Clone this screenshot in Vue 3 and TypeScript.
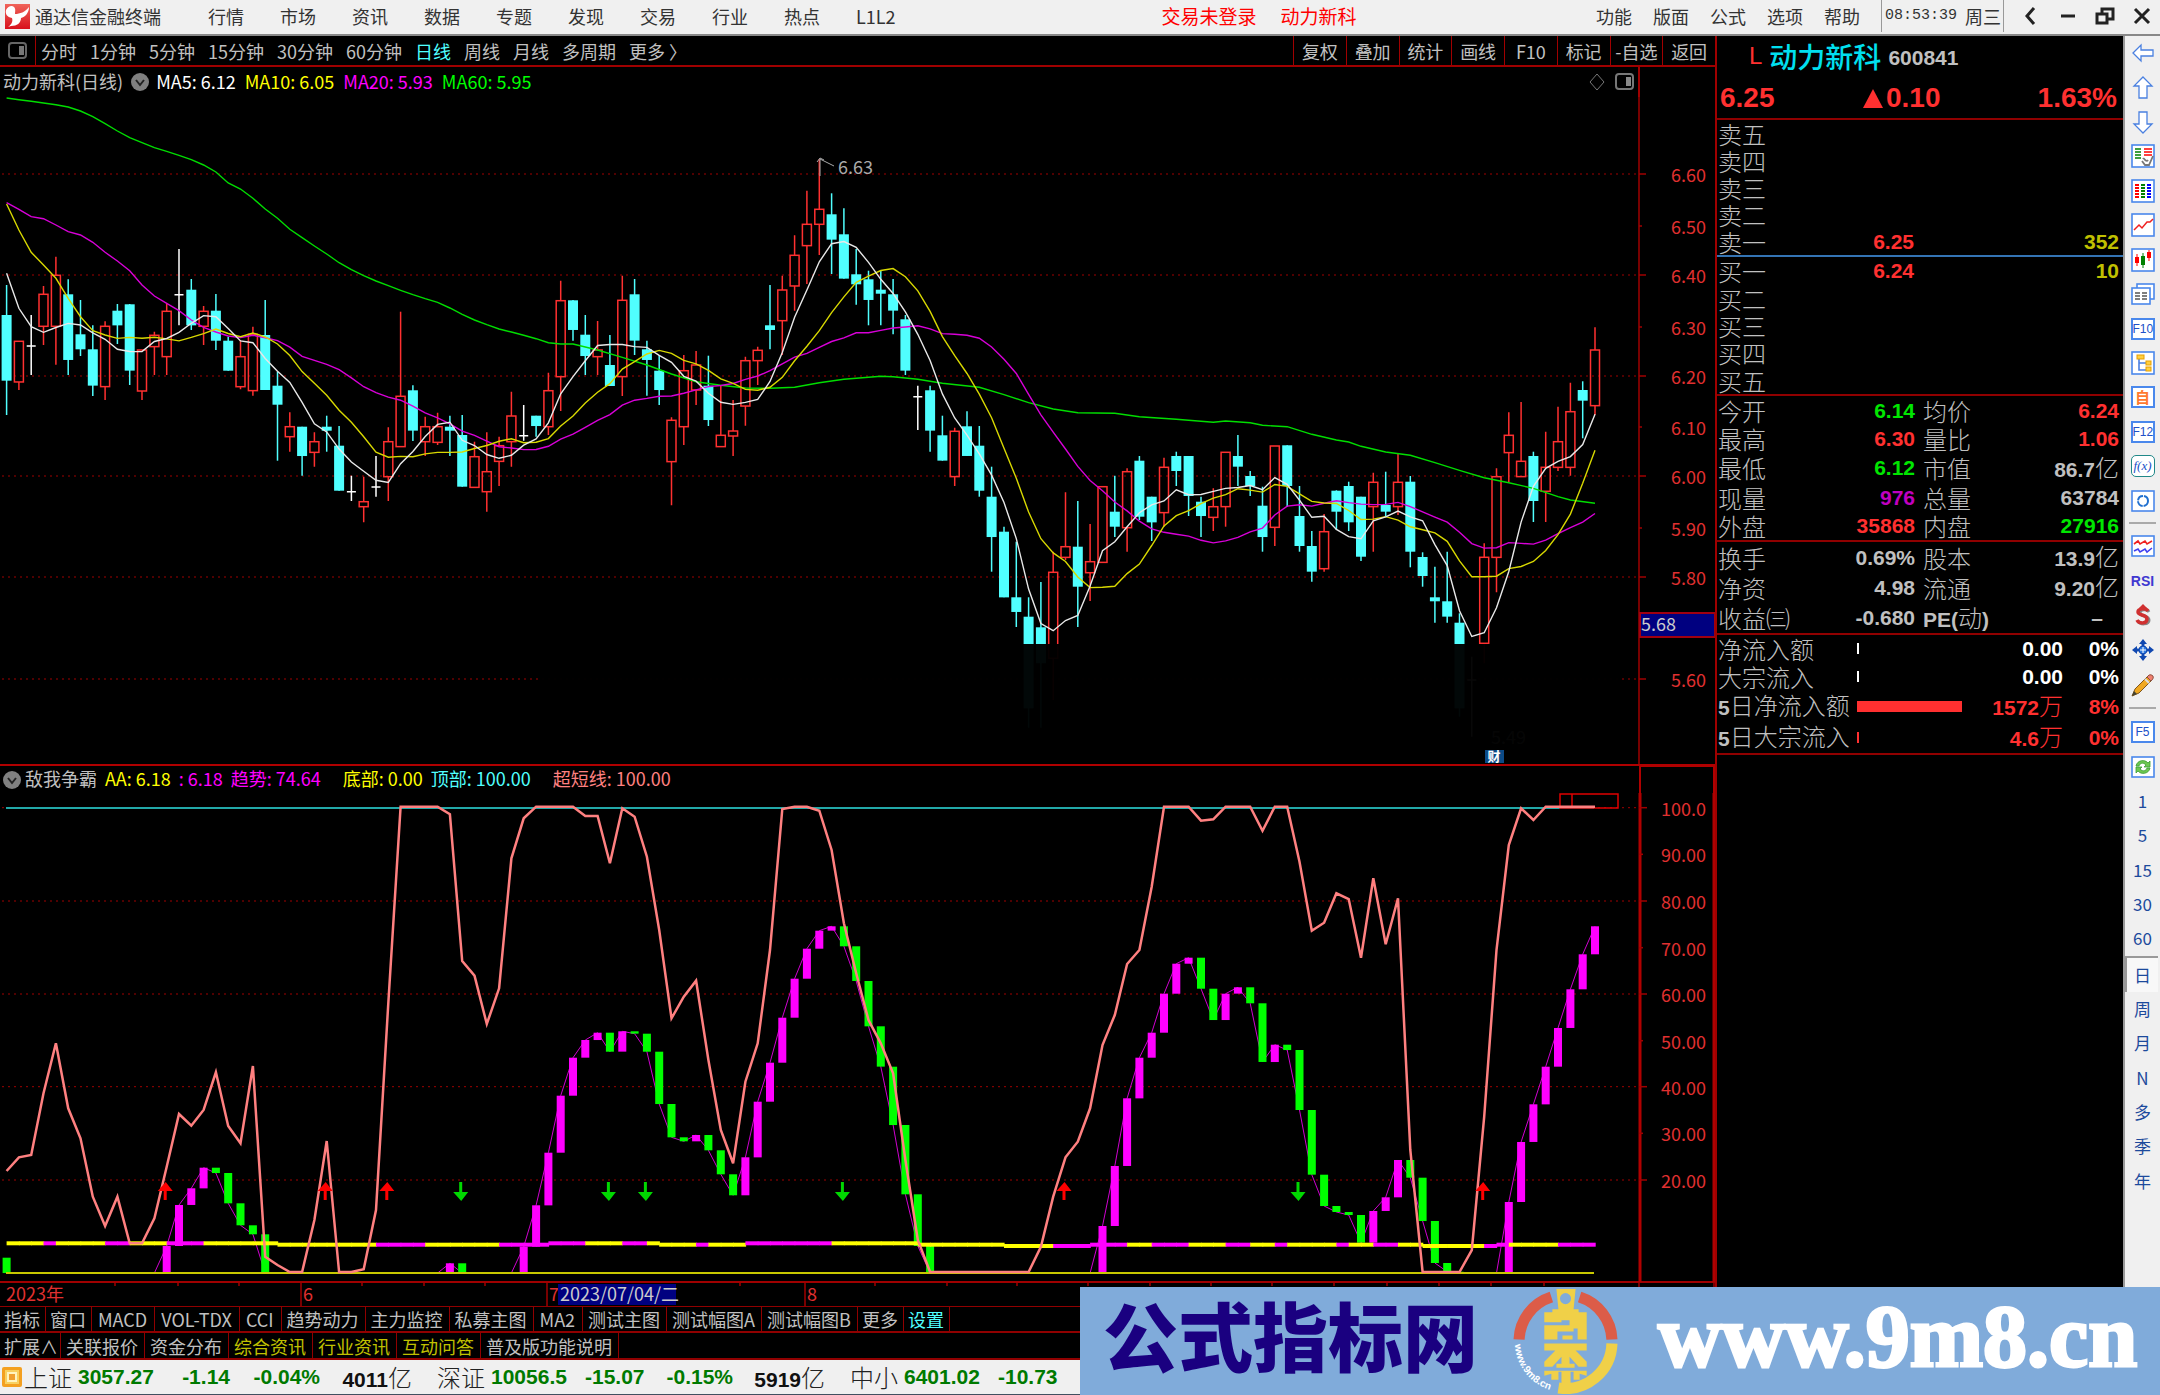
<script setup lang="ts">
type Kind = 'd' | 'u' | 'x'
/** kind, high, body top, body bottom, low – vertical values in thirds of a pixel */
type Candle = [Kind, number, number, number, number]
type Point = [number, number]

const STEP = 12.313
const xOf = (i: number) => Math.round((6.6 + STEP * i) * 10) / 10
const yOf = (v: number) => Math.round((v / 3) * 10) / 10
const yLow = (v: number) => Math.round((790 + v / 3) * 10) / 10

const menus = ['行情', '市场', '资讯', '数据', '专题', '发现', '交易', '行业', '热点', 'L1L2']
const tools = ['功能', '版面', '公式', '选项', '帮助']
const periods = ['分时', '1分钟', '5分钟', '15分钟', '30分钟', '60分钟', '日线', '周线', '月线', '多周期', '更多 〉']
const actions = ['复权', '叠加', '统计', '画线', 'F10', '标记', '-自选', '返回']
const tabs = ['指标', '窗口', 'MACD', 'VOL-TDX', 'CCI', '趋势动力', '主力监控', '私募主图', 'MA2', '测试主图', '测试幅图A', '测试幅图B', '更多', '设置']
const links = ['扩展∧', '关联报价', '资金分布', '综合资讯', '行业资讯', '互动问答', '普及版功能说明']
const hotLinks = ['综合资讯', '行业资讯', '互动问答']
const shortcuts = ['1', '5', '15', '30', '60', '日', '周', '月', 'N', '多', '季', '年']

const candles: Candle[] = [
  ['d', 855, 945, 1142, 1245], ['u', 1024, 1024, 1146, 1170], ['x', 945, 1038, 1038, 1125], ['u', 858, 883, 979, 1035],
  ['u', 770, 826, 979, 1094], ['d', 838, 883, 1080, 1125], ['d', 900, 1003, 1048, 1068], ['d', 976, 1048, 1157, 1188],
  ['u', 964, 979, 1160, 1200], ['d', 912, 932, 976, 1032], ['d', 912, 913, 1112, 1155], ['u', 1050, 1050, 1173, 1200],
  ['u', 995, 1006, 1040, 1125], ['u', 910, 934, 1070, 1125], ['x', 747, 884, 884, 976], ['d', 837, 869, 976, 990],
  ['u', 918, 934, 979, 1035], ['d', 882, 932, 1022, 1050], ['d', 1010, 1022, 1112, 1112], ['u', 1020, 1070, 1160, 1168],
  ['u', 980, 1003, 1172, 1187], ['d', 900, 1005, 1170, 1170], ['d', 1115, 1157, 1214, 1382], ['u', 1237, 1280, 1310, 1355],
  ['d', 1280, 1280, 1368, 1427], ['u', 1297, 1325, 1357, 1400], ['d', 1247, 1280, 1292, 1355], ['d', 1278, 1337, 1472, 1472],
  ['x', 1427, 1475, 1475, 1503], ['u', 1430, 1505, 1520, 1567], ['x', 1368, 1461, 1461, 1490], ['u', 1282, 1325, 1430, 1503],
  ['u', 935, 1189, 1340, 1340], ['d', 1156, 1171, 1292, 1323], ['u', 1250, 1280, 1325, 1368], ['u', 1238, 1280, 1327, 1335],
  ['d', 1247, 1280, 1292, 1368], ['d', 1245, 1305, 1460, 1460], ['u', 1325, 1370, 1462, 1462], ['u', 1297, 1415, 1475, 1535],
  ['u', 1310, 1337, 1384, 1458], ['u', 1175, 1248, 1325, 1400], ['x', 1215, 1307, 1307, 1322], ['d', 1247, 1247, 1278, 1310],
  ['u', 1118, 1172, 1280, 1305], ['u', 842, 902, 1130, 1233], ['d', 900, 901, 990, 1022], ['d', 945, 1004, 1068, 1125],
  ['u', 963, 1050, 1070, 1125], ['d', 1005, 1095, 1158, 1158], ['u', 827, 901, 1130, 1188], ['d', 837, 883, 1022, 1065],
  ['d', 1022, 1048, 1080, 1187], ['d', 1065, 1112, 1170, 1215], ['u', 1252, 1261, 1385, 1516], ['u', 1065, 1112, 1280, 1335],
  ['u', 1053, 1095, 1170, 1215], ['d', 1067, 1157, 1260, 1278], ['u', 1157, 1306, 1340, 1340], ['u', 1200, 1293, 1308, 1368],
  ['u', 1070, 1082, 1218, 1277], ['u', 1040, 1051, 1082, 1155], ['d', 855, 976, 990, 1048], ['u', 827, 870, 962, 1065],
  ['u', 706, 766, 858, 932], ['u', 572, 673, 737, 852], ['u', 478, 628, 673, 765], ['d', 580, 643, 719, 822],
  ['d', 625, 703, 836, 836], ['d', 747, 823, 853, 914], ['d', 812, 838, 900, 976], ['d', 812, 869, 881, 976],
  ['d', 837, 883, 932, 1003], ['d', 945, 958, 1112, 1125], ['x', 1157, 1190, 1190, 1290], ['d', 1157, 1171, 1292, 1355],
  ['d', 1247, 1306, 1382, 1382], ['u', 1283, 1294, 1430, 1458], ['d', 1234, 1279, 1368, 1368], ['d', 1278, 1337, 1472, 1490],
  ['d', 1400, 1490, 1611, 1715], ['d', 1580, 1595, 1792, 1792], ['d', 1625, 1792, 1836, 1881], ['d', 1792, 1850, 2125, 2183],
  ['d', 1746, 1882, 1990, 2183], ['u', 1655, 1717, 1975, 2100], ['u', 1477, 1640, 1672, 1680], ['d', 1503, 1640, 1760, 1881],
  ['u', 1572, 1685, 1718, 1803], ['u', 1460, 1460, 1687, 1687], ['d', 1427, 1535, 1580, 1611], ['u', 1405, 1415, 1583, 1655],
  ['d', 1368, 1382, 1550, 1560], ['d', 1490, 1490, 1567, 1623], ['u', 1373, 1402, 1538, 1580], ['d', 1355, 1368, 1413, 1458],
  ['d', 1368, 1368, 1488, 1548], ['d', 1490, 1505, 1548, 1611], ['u', 1465, 1520, 1552, 1593], ['u', 1357, 1357, 1520, 1580],
  ['d', 1305, 1368, 1400, 1458], ['d', 1413, 1428, 1458, 1488], ['d', 1460, 1517, 1611, 1655], ['u', 1338, 1338, 1582, 1638],
  ['d', 1336, 1336, 1458, 1520], ['d', 1458, 1548, 1638, 1655], ['d', 1593, 1638, 1715, 1745], ['u', 1542, 1595, 1706, 1715],
  ['d', 1471, 1472, 1535, 1590], ['d', 1445, 1458, 1567, 1593], ['d', 1490, 1490, 1670, 1683], ['u', 1418, 1447, 1520, 1655],
  ['d', 1415, 1515, 1535, 1550], ['u', 1362, 1447, 1520, 1545], ['d', 1428, 1445, 1655, 1702], ['d', 1657, 1671, 1728, 1760],
  ['d', 1700, 1792, 1804, 1868], ['d', 1655, 1804, 1850, 1868], ['d', 1840, 1868, 2125, 2150], ['x', 1970, 2040, 2040, 2210],
  ['u', 1630, 1672, 1930, 1990], ['u', 1405, 1430, 1672, 1777], ['u', 1237, 1306, 1358, 1446], ['u', 1206, 1384, 1430, 1430],
  ['d', 1355, 1368, 1503, 1566], ['u', 1295, 1402, 1474, 1566], ['u', 1220, 1325, 1402, 1413], ['u', 1148, 1235, 1402, 1427],
  ['d', 1144, 1170, 1202, 1315], ['u', 982, 1050, 1217, 1245],
]

const closes = candles.map((c) => (c[0] === 'u' ? c[2] : c[3]))

/** Moving average over n closes; the head of the window comes from earlier sessions. */
function average(n: number, head: number[]): string {
  return closes
    .map((_, i) => {
      if (i < n - 1) return head[i]
      return closes.slice(i - n + 1, i + 1).reduce((a, b) => a + b, 0) / n
    })
    .map((v, i) => `${xOf(i)},${yOf(v)}`)
    .join(' ')
}

const ma5 = average(5, [820, 925, 980, 997])
const ma10 = average(10, [612, 690, 757, 795, 835, 895, 950, 992, 1005])
const ma20 = average(20, [608, 628, 650, 656, 675, 695, 705, 727, 757, 783, 812, 855, 888, 910, 932, 960, 982, 996, 1008])

const ma60Points: Point[] = [
  [0, 294], [1, 299], [2, 304], [3, 309], [4, 314], [5, 321], [6, 333], [7, 350], [8, 371], [9, 393], [10, 413], [11, 428],
  [12, 443], [13, 454], [14, 466], [15, 479], [16, 495], [17, 516], [18, 549], [19, 567], [20, 595], [21, 627], [22, 655],
  [23, 688], [24, 713], [25, 738], [26, 762], [27, 788], [28, 809], [29, 827], [30, 843], [31, 857], [32, 871], [33, 884],
  [34, 896], [35, 907], [36, 924], [37, 943], [38, 960], [39, 974], [40, 987], [41, 996], [42, 1006], [43, 1016], [44, 1028],
  [45, 1032], [46, 1032], [48, 1050], [50, 1072], [52, 1095], [54, 1122], [56, 1145], [58, 1156], [60, 1164], [62, 1165],
  [64, 1162], [66, 1148], [68, 1138], [71, 1129], [72, 1130], [74, 1138], [76, 1150], [79, 1162], [81, 1184], [83, 1208],
  [85, 1227], [87, 1238], [90, 1240], [92, 1250], [95, 1258], [98, 1267], [99, 1263], [101, 1268], [102, 1276], [104, 1280],
  [106, 1303], [108, 1320], [109, 1326], [110, 1339], [112, 1356], [114, 1366], [116, 1388], [118, 1411], [120, 1433],
  [122, 1448], [124, 1465], [126, 1490], [127, 1500], [129, 1510],
]
const ma60 = ma60Points.map(([i, v]) => `${xOf(i)},${yOf(v)}`).join(' ')

const priceTicks = [
  { t: '6.60', y: 174, major: true }, { t: '6.50', y: 226, major: false }, { t: '6.40', y: 275, major: true },
  { t: '6.30', y: 327, major: false }, { t: '6.20', y: 376, major: true }, { t: '6.10', y: 427, major: false },
  { t: '6.00', y: 476, major: true }, { t: '5.90', y: 528, major: false }, { t: '5.80', y: 577, major: true },
  { t: '5.60', y: 679, major: true },
]

const shortPoints: Point[] = [
  [0, 1143], [1, 1102], [2, 1095], [3, 910], [4, 760], [5, 955], [6, 1045], [7, 1220], [8, 1308], [9, 1220], [10, 1360],
  [11, 1360], [12, 1285], [13, 1130], [14, 972], [15, 1007], [16, 960], [17, 847], [18, 1008], [19, 1060], [20, 828],
  [21, 1400], [22, 1425], [23, 1446], [24, 1446], [25, 1290], [26, 1053], [27, 1446], [28, 1446], [29, 1438], [30, 1260],
  [31, 640], [32, 50], [35, 50], [36, 73], [37, 513], [38, 557], [39, 702], [40, 595], [41, 205], [42, 85], [43, 50],
  [46, 50], [47, 78], [48, 78], [49, 220], [50, 55], [51, 80], [52, 200], [53, 420], [54, 685], [55, 620], [56, 572],
  [57, 810], [58, 1020], [59, 1120], [60, 875], [61, 760], [62, 480], [63, 57], [64, 50], [65, 50], [66, 62], [67, 180],
  [68, 400], [69, 550], [70, 690], [71, 760], [72, 850], [73, 1110], [74, 1350], [75, 1446], [83, 1446], [84, 1370],
  [85, 1220], [86, 1102], [87, 1055], [88, 955], [89, 765], [90, 675], [91, 522], [92, 480], [93, 290], [94, 50], [96, 50],
  [97, 92], [98, 88], [99, 50], [101, 50], [102, 122], [103, 50], [104, 50], [105, 215], [106, 422], [107, 398], [108, 310],
  [109, 327], [110, 503], [111, 265], [112, 463], [113, 325], [114, 1080], [115, 1446], [118, 1446], [119, 1380], [120, 980],
  [121, 480], [122, 165], [123, 55], [124, 90], [125, 50], [129, 50],
]
const shortLine = shortPoints.map(([i, v]) => `${xOf(i)},${yLow(v)}`).join(' ')

const zero = 1449
const flat = (n: number) => Array<number>(n).fill(zero)
const trend: number[] = [
  ...flat(13), 1368, 1245, 1195, 1133, 1149, 1240, 1306, 1333, ...flat(15), 1420, ...flat(5),
  1370, 1246, 1088, 917, 803, 750, 728, 785, 724, 731, 785, 942, 1042, 1054, 1035, 1081, 1153, 1216, 1102, 935, 818, 683,
  566, 476, 422, 409, 469, 573, 709, 830, 1005, 1213, 1368, ...flat(14), 1308, 1128, 925, 803, 728, 611, 521, 503, 596,
  690, 611, 592, 640, 816, 764, 780, 960, 1154, 1248, 1266, 1275, 1358, 1263, 1222, 1110, 1163, 1293, 1419, 1445,
  ...flat(4), 1236, 1056, 943, 830, 714, 598, 493, 409,
]
const trendLine = trend.map((v, i) => `${xOf(i)},${yLow(v)}`).join(' ')
const bars = trend
  .map((v, i) => {
    const prev = i === 0 ? 1403 : trend[i - 1]
    return { x: xOf(i) - 4, y: yLow(Math.min(v, prev)), h: Math.max(2, Math.abs(v - prev) / 3), up: v < prev, skip: v === prev }
  })
  .filter((b) => !b.skip)

const ribbonStops = [3, 4, 8, 10, 13, 16, 30, 34, 40, 47, 50, 52, 56, 57, 60, 67, 85, 91, 93, 96, 99, 101, 103, 104, 108, 109, 111, 113, 120, 122, 126, 129]
const ribbonLevels: Point[] = [[22, 1360], [44, 1364], [53, 1360], [60, 1364], [74, 1360], [81, 1364], [88, 1368], [115, 1364], [121, 1368], [129, 1364]]
const ribbon = Array.from({ length: 129 }, (_, i) => {
  const band = ribbonStops.findIndex((s) => i < s)
  const level = ribbonLevels.find(([end]) => i < end) ?? [129, 1364]
  return { x: xOf(i), y: yLow(level[1]) - 2, hot: band % 2 === 1 }
})

const lowTicks = [
  { t: '100.0', v: 53, major: true }, { t: '90.00', v: 193, major: false }, { t: '80.00', v: 333, major: true },
  { t: '70.00', v: 473, major: false }, { t: '60.00', v: 612, major: true }, { t: '50.00', v: 752, major: false },
  { t: '40.00', v: 890, major: true }, { t: '30.00', v: 1030, major: false }, { t: '20.00', v: 1170, major: true },
]
const buySignals = [13, 26, 31, 86, 120]
const sellSignals = [37, 49, 52, 68, 105]
const dateTicks = [115, 178, 239, 362, 424, 485, 740, 875, 947, 1017, 1088, 1150, 1211, 1272, 1334, 1387, 1439, 1491, 1544]
const months = [{ t: '6', x: 301 }, { t: '7', x: 547 }, { t: '8', x: 805 }]

const asks = [['卖五'], ['卖四'], ['卖三'], ['卖二'], ['卖一', '6.25', '352']]
const bids = [['买一', '6.24', '10'], ['买二'], ['买三'], ['买四'], ['买五']]

interface Cell { k: string; v: string; c: string; unit?: string }
const stats: [Cell, Cell][] = [
  [{ k: '今开', v: '6.14', c: 'green' }, { k: '均价', v: '6.24', c: 'red' }],
  [{ k: '最高', v: '6.30', c: 'red' }, { k: '量比', v: '1.06', c: 'red' }],
  [{ k: '最低', v: '6.12', c: 'green' }, { k: '市值', v: '86.7', c: 'gray', unit: '亿' }],
  [{ k: '现量', v: '976', c: 'violet' }, { k: '总量', v: '63784', c: 'gray' }],
  [{ k: '外盘', v: '35868', c: 'red' }, { k: '内盘', v: '27916', c: 'green' }],
]
const finance: [Cell, Cell][] = [
  [{ k: '换手', v: '0.69%', c: 'gray' }, { k: '股本', v: '13.9', c: 'gray', unit: '亿' }],
  [{ k: '净资', v: '4.98', c: 'gray' }, { k: '流通', v: '9.20', c: 'gray', unit: '亿' }],
  [{ k: '收益㈢', v: '-0.680', c: 'gray' }, { k: 'PE(动)', v: '–', c: 'gray dash' }],
]
const flows = [
  { p: '', k: '净流入额', w: 2, v: '0.00', unit: '', pct: '0%', c: 'white' },
  { p: '', k: '大宗流入', w: 2, v: '0.00', unit: '', pct: '0%', c: 'white' },
  { p: '5', k: '日净流入额', w: 105, v: '1572', unit: '万', pct: '8%', c: 'red' },
  { p: '5', k: '日大宗流入', w: 2, v: '4.6', unit: '万', pct: '0%', c: 'red' },
]
const indexes = [
  { n: '上证', p: '3057.27', d: '-1.14', r: '-0.04%', a: '4011' },
  { n: '深证', p: '10056.5', d: '-15.07', r: '-0.15%', a: '5919' },
  { n: '中小', p: '6401.02', d: '-10.73', r: '', a: '' },
]

const tabClass = (t: string) => ({
  brief: /^[\u4e00-\u9fff]{2}$/.test(t),
  latin: /^[A-Z]/.test(t),
  set: t === '设置',
})
</script>

<template>
  <div class="app">
    <header class="menubar">
      <div class="brand">
        <svg width="25" height="25" viewBox="0 0 25 25">
          <defs>
            <linearGradient id="brandRed" x1="0" y1="0" x2="0" y2="1">
              <stop offset="0" stop-color="#f0645a" /><stop offset="1" stop-color="#d8101c" />
            </linearGradient>
          </defs>
          <rect width="25" height="25" fill="url(#brandRed)" />
          <path d="M1 6C3 2 7 1 9 3C11 5 10 8 10 10C15 10 20 8 24 3C24 9 20 13 16 14C16 19 12 22 6 22L3 23C7 20 8 17 7 14C2 13 0 10 1 6Z" fill="#fff" />
        </svg>
        <span>通达信金融终端</span>
      </div>
      <nav class="menus"><button v-for="m in menus" :key="m" type="button">{{ m }}</button></nav>
      <div class="alerts"><span>交易未登录</span><span>动力新科</span></div>
      <nav class="tools"><button v-for="m in tools" :key="m" type="button">{{ m }}</button></nav>
      <div class="clock"><time>08:53:39</time><span>周三</span></div>
      <div class="window-keys">
        <button type="button" aria-label="后退"><svg width="20" height="20" viewBox="0 0 20 20"><path d="M13 2L6 10L13 18" /></svg></button>
        <button type="button" aria-label="最小化"><svg width="20" height="20" viewBox="0 0 20 20"><path d="M3 10H17" /></svg></button>
        <button type="button" aria-label="还原"><svg width="20" height="20" viewBox="0 0 20 20"><path d="M2 8H12V17H2ZM7 8V3H18V13H12" /></svg></button>
        <button type="button" aria-label="关闭"><svg width="20" height="20" viewBox="0 0 20 20"><path d="M3 3L17 17M17 3L3 17" /></svg></button>
      </div>
    </header>

    <div class="body">
      <main class="charts">
        <div class="periodbar">
          <button class="panel-key" type="button" aria-label="侧栏">
            <svg width="20" height="18" viewBox="0 0 20 18"><rect x="1" y="1" width="17" height="15" rx="3" fill="none" stroke="#666" stroke-width="2" /><rect x="11" y="4" width="5" height="9" fill="#777" /></svg>
          </button>
          <nav class="periods"><button v-for="p in periods" :key="p" type="button" :class="{ on: p === '日线' }">{{ p }}</button></nav>
          <div class="actions"><button v-for="a in actions" :key="a" type="button">{{ a }}</button></div>
        </div>

        <section class="pane">
          <div class="legend">
            <span class="gray">动力新科(日线)</span>
            <svg class="drop" width="18" height="18" viewBox="0 0 18 18"><circle cx="9" cy="9" r="9" fill="#808080" /><path d="M5 7L9 12L13 7" fill="none" stroke="#222" stroke-width="2" /></svg>
            <span class="paper">MA5: 6.12</span><span class="yellow">MA10: 6.05</span><span class="magenta">MA20: 5.93</span><span class="lime">MA60: 5.95</span>
            <svg class="corner" width="50" height="20" viewBox="0 0 50 20"><path d="M9 2L16 10L9 18L2 10Z" fill="none" stroke="#777" /><rect x="28" y="2" width="17" height="15" rx="3" fill="none" stroke="#777" stroke-width="2" /><rect x="38" y="5" width="5" height="9" fill="#888" /></svg>
            <i class="axis-cap"></i>
          </div>
          <svg class="plot" viewBox="0 97 1715 667" role="img" aria-label="K线图">
            <g class="grid"><path v-for="t in priceTicks.filter((p) => p.major)" :key="t.t" :d="`M2 ${t.y}H1638`" /></g>
            <g v-for="(c, i) in candles" :key="i" :class="['candle', c[0]]">
              <template v-if="c[0] === 'd'">
                <path :d="`M${xOf(i)} ${yOf(c[1])}V${yOf(c[4])}`" />
                <rect :x="xOf(i) - 5" :y="yOf(c[2])" width="10" :height="(c[3] - c[2]) / 3" />
              </template>
              <template v-else-if="c[0] === 'u'">
                <path :d="`M${xOf(i)} ${yOf(c[1])}V${yOf(c[2])}M${xOf(i)} ${yOf(c[3])}V${yOf(c[4])}`" />
                <rect :x="xOf(i) - 4.5" :y="yOf(c[2])" width="9" :height="(c[3] - c[2]) / 3" />
              </template>
              <path v-else :d="`M${xOf(i)} ${yOf(c[1])}V${yOf(c[4])}M${xOf(i) - 4.5} ${yOf(c[2])}h9`" />
            </g>
            <polyline class="ma" :points="ma60" stroke="#0d0" />
            <polyline class="ma" :points="ma20" stroke="#d800d8" />
            <polyline class="ma" :points="ma10" stroke="#d8d800" />
            <polyline class="ma" :points="ma5" stroke="#e8e8e8" />
            <path d="M820 176V159M817 162L820 158L824 160M820 159L834 166" fill="none" stroke="#aaa" />
            <text x="838" y="174" fill="#aaa">6.63</text>
            <text x="1491" y="744" fill="#aaa">5.49</text>
            <rect x="538" y="644" width="1084" height="104" fill="#000" opacity="0.97" />
            <rect x="1485" y="750" width="19" height="13" fill="#0c4a86" />
            <text class="tag" x="1494" y="761" text-anchor="middle">财</text>
            <g class="axis">
              <path d="M1639 97V764" />
              <path v-for="t in priceTicks" :key="t.t" :d="`M1639 ${t.y}h${t.major ? 7 : 3}`" />
              <text v-for="t in priceTicks" :key="t.t" x="1706" :y="t.y + 8" text-anchor="end">{{ t.t }}</text>
            </g>
            <rect x="1640" y="613" width="75" height="24" fill="#000080" stroke="#a00010" stroke-width="2" />
            <text x="1641" y="631" fill="#ccc">5.68</text>
          </svg>
        </section>

        <section class="pane lower">
          <div class="legend">
            <svg class="drop" width="18" height="18" viewBox="0 0 18 18"><circle cx="9" cy="9" r="9" fill="#808080" /><path d="M5 7L9 12L13 7" fill="none" stroke="#222" stroke-width="2" /></svg>
            <span class="gray">敌我争霸</span><span class="yellow">AA: 6.18</span><span class="magenta">: 6.18</span><span class="magenta">趋势: 74.64</span>
            <span class="yellow wide">底部: 0.00</span><span class="cyan">顶部: 100.00</span><span class="salmon wide">超短线: 100.00</span>
            <i class="axis-cap"></i>
          </div>
          <svg class="plot" viewBox="0 793 1715 513" role="img" aria-label="敌我争霸指标">
            <g class="grid"><path v-for="t in lowTicks.filter((p) => p.major)" :key="t.t" :d="`M2 ${yLow(t.v)}H1638`" /></g>
            <path d="M6 808H1594" stroke="#22a8a8" stroke-width="2" />
            <path d="M1560 794H1618V808H1560ZM1572 794V808" fill="none" stroke="#e00000" stroke-width="1.5" />
            <polyline :points="trendLine" fill="none" stroke="#d000d0" />
            <rect v-for="(b, i) in bars" :key="i" :x="b.x" :y="b.y" width="8" :height="b.h" :fill="b.up ? '#f0f' : '#0f0'" />
            <rect v-for="(r, i) in ribbon" :key="i" :x="r.x" :y="r.y" width="13" height="4" :fill="r.hot ? '#f0f' : '#ff0'" />
            <path d="M6 1273H1594" stroke="#c8c800" stroke-width="2" />
            <polyline :points="shortLine" fill="none" stroke="#ff8080" stroke-width="2.5" />
            <path v-for="s in buySignals" :key="s" :d="`M${xOf(s) - 1} 1182l7 9h-6v9h-3v-9h-6z`" fill="#f00" />
            <path v-for="s in sellSignals" :key="s" :d="`M${xOf(s) - 1} 1201l7 -9h-6v-10h-3v10h-6z`" fill="#00d800" />
            <path d="M0 1282H1715" stroke="#a00000" stroke-width="2" />
            <g class="axis">
              <path d="M1640 793V1282M1714 793V1282" class="thick" />
              <path d="M1639 1282V1306M1714 1282V1306" />
              <path v-for="t in lowTicks" :key="t.t" :d="`M1639 ${yLow(t.v)}h${t.major ? 8 : 4}`" />
              <text v-for="t in lowTicks" :key="t.t" x="1706" :y="yLow(t.v) + 8" text-anchor="end">{{ t.t }}</text>
              <path v-for="x in dateTicks" :key="x" :d="`M${x} 1282v4`" />
              <text x="6" y="1301">2023年</text>
              <g v-for="m in months" :key="m.t"><path :d="`M${m.x} 1282v24`" /><text :x="m.x + 2" y="1301">{{ m.t }}</text></g>
            </g>
            <rect x="558" y="1284" width="118" height="21" fill="#000080" />
            <text x="560" y="1301" fill="#ccc">2023/07/04/二</text>
          </svg>
        </section>

        <nav class="tabs"><button v-for="t in tabs" :key="t" type="button" :class="tabClass(t)">{{ t }}</button></nav>
        <nav class="tabs second"><button v-for="t in links" :key="t" type="button" :class="{ hot: hotLinks.includes(t) }">{{ t }}</button></nav>
      </main>

      <aside class="quote">
        <div class="head">
          <div class="name"><b class="flag">L</b><strong>动力新科</strong><b class="code">600841</b></div>
          <div class="price"><span>6.25</span><span class="rise"><svg width="20" height="20" viewBox="0 0 20 20"><path d="M10 1L20 20H0Z" fill="#ff3030" /></svg>0.10</span><span>1.63%</span></div>
        </div>
        <table class="book asks"><tbody><tr v-for="r in asks" :key="r[0]"><th scope="row">{{ r[0] }}</th><td class="red">{{ r[1] }}</td><td class="olive">{{ r[2] }}</td></tr></tbody></table>
        <table class="book bids"><tbody><tr v-for="r in bids" :key="r[0]"><th scope="row">{{ r[0] }}</th><td class="red">{{ r[1] }}</td><td class="olive">{{ r[2] }}</td></tr></tbody></table>
        <table class="stats"><tbody>
          <tr v-for="r in stats" :key="r[0].k"><template v-for="c in r" :key="c.k"><th scope="row">{{ c.k }}</th><td :class="c.c">{{ c.v }}<em v-if="c.unit">{{ c.unit }}</em></td></template></tr>
        </tbody></table>
        <table class="stats finance"><tbody>
          <tr v-for="r in finance" :key="r[0].k"><template v-for="c in r" :key="c.k">
            <th scope="row"><template v-if="c.k === 'PE(动)'"><b>PE(</b>动<b>)</b></template><template v-else>{{ c.k }}</template></th>
            <td :class="c.c">{{ c.v }}<em v-if="c.unit">{{ c.unit }}</em></td>
          </template></tr>
        </tbody></table>
        <table class="flow"><tbody>
          <tr v-for="f in flows" :key="f.k" :class="f.c"><th scope="row"><b v-if="f.p">{{ f.p }}</b>{{ f.k }}</th><td class="gauge"><i :style="{ width: f.w + 'px' }"></i></td><td>{{ f.v }}<em v-if="f.unit">{{ f.unit }}</em></td><td>{{ f.pct }}</td></tr>
        </tbody></table>
      </aside>

      <aside class="rail">
        <div class="group long">
          <button type="button" aria-label="向左"><svg width="24" height="24" viewBox="0 0 24 24"><path class="arrow" d="M2 12L10 4V9H22V15H10V20Z" /></svg></button>
          <button type="button" aria-label="向上"><svg width="24" height="24" viewBox="0 0 24 24"><path class="arrow" d="M12 1L21 10H16V22H8V10H3Z" /></svg></button>
          <button type="button" aria-label="向下"><svg width="24" height="24" viewBox="0 0 24 24"><path class="arrow" d="M12 23L21 14H16V2H8V14H3Z" /></svg></button>
          <button type="button" aria-label="报价"><svg width="24" height="24" viewBox="0 0 24 24"><rect class="frame" x="1" y="1" width="22" height="22" /><path d="M4 5H10M4 8H10M4 11H10M4 14H10" stroke="#008000" stroke-width="1.6" /><path d="M13 5H21M13 8H21M13 11H21" stroke="#f00" stroke-width="1.6" /><path d="M11 17L14 21H18L22 12M12 15C13 13 15 19 17 16" fill="none" stroke="#777" stroke-width="1.8" /></svg></button>
          <button type="button" aria-label="列表"><svg width="24" height="24" viewBox="0 0 24 24"><rect class="frame" x="1" y="1" width="22" height="22" /><path d="M6 5V20" stroke="#f00" stroke-width="4" stroke-dasharray="2 1" /><path d="M12 5V20" stroke="#008000" stroke-width="4" stroke-dasharray="2 1" /><path d="M18 5V20" stroke="#00f" stroke-width="4" stroke-dasharray="2 1" /></svg></button>
          <button type="button" aria-label="分时图"><svg width="24" height="24" viewBox="0 0 24 24"><rect class="frame" x="1" y="1" width="22" height="22" /><path d="M3 17L8 12L11 15L16 9L19 9L22 6" fill="none" stroke="#f02020" stroke-width="1.5" /></svg></button>
          <button type="button" aria-label="K线"><svg width="24" height="24" viewBox="0 0 24 24"><rect class="frame" x="1" y="1" width="22" height="22" /><path d="M6 6V18M18 2V13" stroke="#f00" /><rect x="4" y="9" width="4" height="6" fill="#f00" /><rect x="16" y="4" width="4" height="6" fill="#f00" /><path d="M12 5V20" stroke="#008000" /><rect x="10" y="8" width="4" height="9" fill="#008000" /></svg></button>
          <button type="button" aria-label="资料"><svg width="24" height="24" viewBox="0 0 24 24"><rect class="frame" x="6" y="2" width="17" height="15" /><rect class="frame" x="1" y="6" width="18" height="16" /><path d="M4 11H9M11 11H16M4 14H9M11 14H16M4 17H9M11 17H16" stroke="#555" stroke-width="1.5" /></svg></button>
          <button type="button"><span class="key">F10</span></button>
          <button type="button" aria-label="板块"><svg width="24" height="24" viewBox="0 0 24 24"><rect class="frame" x="1" y="1" width="22" height="22" /><path d="M8 7V19H15M8 12H15" fill="none" stroke="#4a7fe0" stroke-width="1.6" /><rect x="6" y="4" width="7" height="4" fill="#ffd040" stroke="#e8a000" /><rect x="15" y="10" width="5" height="4" fill="#ffd040" stroke="#e8a000" /><rect x="15" y="16" width="5" height="4" fill="#ffd040" stroke="#e8a000" /></svg></button>
          <button type="button"><span class="key self">自</span></button>
          <button type="button"><span class="key">F12</span></button>
          <button type="button"><span class="key fx">f(x)</span></button>
          <button type="button" aria-label="刷新"><svg width="24" height="24" viewBox="0 0 24 24"><rect class="frame" x="1" y="2" width="22" height="20" /><circle cx="12" cy="12" r="5" fill="none" stroke="#2070d0" stroke-width="2" stroke-dasharray="7 1" /></svg></button>
        </div>
        <hr />
        <div class="group mid">
          <button type="button" aria-label="多股"><svg width="24" height="24" viewBox="0 0 24 24"><rect class="frame" x="1" y="2" width="22" height="20" /><path d="M3 10L7 7L9 10L14 7L16 10L21 7" fill="none" stroke="#f02020" stroke-width="1.6" /><path d="M3 17L7 15L9 18L14 15L16 18L21 14" fill="none" stroke="#4040f0" stroke-width="1.6" /></svg></button>
          <button type="button" class="rsi">RSI</button>
          <button type="button" aria-label="资金"><svg width="24" height="24" viewBox="0 0 24 24"><path d="M18 9C16 6 9 6 9 10C9 14 18 12 18 17C18 22 9 22 7 18" fill="none" stroke="#888" stroke-width="3" /><path d="M12 1L16 5H8Z" fill="#d03030" /><path d="M17 8C15 5 7 5 7 9C7 13 16 11 16 16C16 21 8 21 6 17" fill="none" stroke="#d03030" stroke-width="3.5" /></svg></button>
          <button type="button" aria-label="移动"><svg width="24" height="24" viewBox="0 0 24 24"><path d="M12 1L16 6H8ZM12 23L8 18H16ZM1 12L6 8V16ZM23 12L18 16V8Z" fill="#1048b0" /><path d="M12 6V18M6 12H18" stroke="#1048b0" stroke-width="3" /><circle cx="12" cy="12" r="4" fill="#2a78e0" stroke="#1048b0" /><path d="M12 9V15M9 12H15" stroke="#fff" /></svg></button>
          <button type="button" aria-label="画笔"><svg width="24" height="24" viewBox="0 0 24 24"><path d="M1 23L4 16L16 4L20 8L8 20Z" fill="#f0a820" stroke="#80561c" /><path d="M16 4L18 2Q20 1 22 3Q23 5 21 7L20 8Z" fill="#f08070" stroke="#905040" /><path d="M14 6L18 10" stroke="#ddd" stroke-width="2" /><path d="M1 23L3 18L6 21Z" fill="#443" /></svg></button>
        </div>
        <hr class="deep" />
        <div class="group last">
          <button type="button"><span class="key">F5</span></button>
          <button type="button" aria-label="重新加载"><svg width="24" height="24" viewBox="0 0 24 24"><rect class="frame" x="1" y="2" width="22" height="20" /><path d="M5 11C6 5 14 4 17 8L19 6V12H13L15 10C12 7 9 8 8 11ZM19 13C18 19 10 20 7 16L5 18V12H11L9 14C12 17 15 16 16 13Z" fill="#6cc850" stroke="#3c9c38" stroke-width="0.8" /></svg></button>
          <button v-for="s in shortcuts" :key="s" type="button" :class="['cut', { on: s === '日' }]">{{ s }}</button>
        </div>
      </aside>
    </div>

    <footer class="status">
      <svg width="24" height="22" viewBox="0 0 24 22"><rect x="2" y="1" width="20" height="20" rx="2" fill="#f4a020" /><rect x="6" y="5" width="12" height="12" fill="#fff4c0" stroke="#f8d060" stroke-width="2" /><rect x="9" y="8" width="6" height="6" fill="#f0a030" /></svg>
      <div v-for="x in indexes" :key="x.n" class="index"><span class="n">{{ x.n }}</span><b>{{ x.p }}</b><b class="r">{{ x.d }}</b><b class="r">{{ x.r }}</b><span v-if="x.a" class="amt"><b>{{ x.a }}</b>亿</span></div>
    </footer>

    <div class="banner">
      <span class="site">公式指标网</span>
      <svg class="coin" width="105" height="105" viewBox="0 0 104 104">
        <g fill="none" stroke-width="11">
          <path d="M6 50A46 46 0 0 1 38 8" stroke="#dc5c48" /><path d="M66 8A46 46 0 0 1 98 50" stroke="#dc5c48" />
          <path d="M98 54A46 46 0 0 1 45 98" stroke="#f0d048" />
        </g>
        <path fill-rule="evenodd" fill="#f0d048" d="M43 0H62L60 20H65V23H73V50H31V23H39V20H45ZM52 4A5 5 0 1 0 52 15A5 5 0 1 0 52 4ZM31 33H48V31H56V36H31ZM44 50V42H60V39H64V50H59V46H49V50Z" />
        <path fill="#f0d048" d="M31 54H73V61H62L73 72V77H65L56 67V74H61V78H43V74H48V67L39 77H31V72L42 61H31ZM31 81H73V86L66 84V90H60V82H57V96H48V82H45V90H38V84L31 86Z" />
        <path id="coinArc" d="M2 55A49 49 0 0 0 52 102" fill="none" />
        <text class="coin-text"><textPath href="#coinArc">www.9m8.cn</textPath></text>
      </svg>
      <span class="url">www.9m8.cn</span>
    </div>
  </div>
</template>

<style>
body { margin: 0; background: #000; }
</style>

<style scoped>
.app { position: relative; overflow: hidden; background: #000; color: #c0c0c0; font: 18px/24px "Noto Sans CJK SC", sans-serif; }
button { margin: 0; padding: 0; border: 0; background: none; color: inherit; font: inherit; white-space: nowrap; }
svg { display: block; flex: none; }
em { font-style: normal; font-weight: 400; }

.menubar { display: flex; align-items: center; box-sizing: border-box; height: 36px; padding-bottom: 2px; border-bottom: 2px solid #888; background: #f0f0f0; color: #333; }
.brand { display: flex; align-items: center; gap: 5px; width: 203px; padding-left: 5px; }
.menus, .tools { display: flex; }
.menus button { width: 72px; text-align: left; }
.tools button { width: 57px; text-align: left; }
.alerts { display: flex; flex: 1; justify-content: center; gap: 24px; padding-right: 6px; color: #f00; font-size: 19px; }
.clock { display: flex; align-items: center; gap: 8px; width: 118px; height: 32px; padding-left: 3px; border: solid #999; border-width: 0 1px; }
.clock time { font: 15px/24px "Liberation Mono", monospace; }
.window-keys { display: flex; padding-left: 8px; }
.window-keys button { display: flex; justify-content: center; width: 37px; }
.window-keys path { fill: none; stroke: #222; stroke-width: 3; }

.body { display: grid; grid-template-columns: minmax(0, 1fr) 408px 37px; }
.charts { min-width: 0; }
.periodbar { display: flex; height: 29px; border-bottom: 2px solid #a00000; }
.panel-key { display: flex; align-items: center; padding: 0 7px 0 8px; border-right: 1px solid #a00000; }
.periods { display: flex; flex: 1; gap: 13px; padding-left: 5px; align-items: center; }
.periods .on { color: #50ffff; }
.actions { display: flex; width: 422px; }
.actions button { flex: 1; border-left: 1px solid #a00000; }

.legend { display: flex; align-items: center; gap: 9px; height: 30px; padding-left: 3px; line-height: 20px; }
.legend span { padding-bottom: 3px; }
.legend .drop { margin: 0 -2px 0 -1px; }
.corner { margin-left: auto; }
.axis-cap { align-self: stretch; box-sizing: border-box; width: 77px; margin-left: -9px; border-left: 2px solid #a00000; }
.pane { border-bottom: 2px solid #b00000; }
.lower { border-bottom-color: #900000; border-bottom-width: 1px; }
.lower .legend { height: 27px; gap: 8px; }
.lower .drop { margin: 0 -4px 0 0; }
.lower .wide { margin-left: 14px; }
.lower .axis-cap { width: 76px; margin-left: auto; border: 2px solid #b00000; border-bottom: 0; border-top: 1px solid #b00000; }
.gray { color: #c0c0c0; }
.paper { color: #fff; }
.yellow { color: #ff0; }
.magenta { color: #f0f; }
.lime { color: #0f0; }
.cyan { color: #50ffff; }
.salmon { color: #ff8080; }

.plot { width: 100%; height: auto; font-size: 18px; }
.grid { stroke: #a00000; stroke-dasharray: 2 4; fill: none; }
.candle { fill: none; stroke-width: 1.5; }
.candle.d { fill: #50ffff; stroke: #50ffff; }
.candle.d rect { stroke: none; }
.candle.u { stroke: #ff3030; }
.candle.x { stroke: #fff; }
.ma { fill: none; stroke-width: 1.4; }
.tag { fill: #fff; font-size: 13px; font-weight: 700; }
.axis path { stroke: #a00000; stroke-width: 1.5; }
.axis .thick { stroke: #b00000; stroke-width: 3; }
.axis text { fill: #e03030; }

.tabs { display: flex; height: 24px; border-bottom: 2px solid #900000; }
.tabs button { padding: 0 6px 0 5px; border-right: 1px solid #900000; }
.tabs .brief { padding: 0 5px 0 4px; }
.tabs .latin { padding: 0 7px 0 6px; }
.tabs .set { color: #50ffff; }
.tabs .hot { color: #c0c000; }
.second { height: 25px; }
.second button:first-child { padding: 0 2px 0 4px; }

.quote { border-left: 2px solid #a00000; }
.head { box-sizing: border-box; height: 84px; border-bottom: 2px solid #900000; }
.name { display: flex; align-items: center; height: 40px; padding-left: 32px; line-height: 32px; }
.flag { color: #ff3030; font: 24px/32px "Liberation Sans", sans-serif; }
.name strong { margin: 0 7px; color: #00e0f0; font-size: 28px; font-weight: 500; }
.code { padding-top: 4px; font: bold 21px/32px "Liberation Sans", sans-serif; }
.price { display: grid; grid-template-columns: 143px 1fr 1fr; height: 44px; padding: 0 6px 0 3px; color: #ff3030; font: bold 28px/44px "Liberation Sans", sans-serif; }
.price span { text-align: right; }
.price span:first-child { text-align: left; }
.price .rise { display: flex; align-items: center; gap: 3px; }
table { width: 100%; border-collapse: separate; border-spacing: 0; table-layout: fixed; }
th { padding: 0; color: #c0c0c0; font-size: 24px; line-height: 27px; font-weight: 300; text-align: left; white-space: nowrap; }
th b { font: bold 21px/27px "Liberation Sans", sans-serif; }
td { padding: 0; font: bold 21px/27px "Liberation Sans", sans-serif; text-align: right; white-space: nowrap; }
td em { font: 300 24px/27px "Noto Sans CJK SC", sans-serif; }
.book, .stats, .flow { box-sizing: border-box; border-bottom: 2px solid #900000; }
.book th, .stats th, .flow th { padding-left: 1px; }
.book { height: 137px; }
.bids { height: 139px; }
.book td:last-child, .stats td:last-child, .flow td:last-child { padding-right: 4px; }
.book th, .book td:nth-child(2) { width: 98px; }
.asks { border-bottom-color: #3474b4; }
.quote .red { color: #ff3030; }
.green { color: #00e600; }
.violet { color: #c000c0; }
.olive { color: #c0c000; }
.white { color: #fff; }
.stats { height: 146px; }
.stats th { width: 88px; }
.stats td:nth-child(2) { width: 109px; }
.stats th + td + th { padding-left: 8px; }
.stats td.dash { padding-right: 20px; }
.finance { height: 93px; }
.flow { height: 120px; }
.flow th { width: 137px; }
.flow .gauge { width: 108px; }
.flow i { display: block; height: 11px; margin-left: 2px; background: currentColor; }
.flow td:last-child { width: 56px; }

.rail { border-left: 2px solid #999; background: #f0f0f0; color: #1c4a9c; }
.group { display: flex; flex-direction: column; }
.group button { display: flex; flex: 1; align-items: center; justify-content: center; }
.long { height: 482px; }
.last { height: 483px; }
.mid { height: 173px; }
.rail hr { margin: 4px 4px 5px; border: 0; border-top: 2px solid #aaa; }
.rail .deep { margin: 5px 4px 6px; }
.arrow { fill: #fff; stroke: #4a80e0; stroke-width: 1.3; }
.frame { fill: #fff; stroke: #4a88ec; stroke-width: 1.6; }
.key { box-sizing: border-box; width: 24px; height: 22px; border: 2px solid #4a88ec; background: #fff; color: #2050c8; font: 12px/19px "Liberation Sans", sans-serif; text-align: center; }
.self { color: #ff7830; font: bold 15px/18px "Noto Sans CJK SC", sans-serif; }
.fx { border: 1px solid #208888; border-radius: 5px; font: italic 13px/20px "Liberation Serif", serif; }
.group .rsi { color: #4038d0; font: bold 14px/20px "Liberation Sans", sans-serif; }
.group .cut { font-size: 17px; }
.group .on { margin-right: 2px; border: solid #999; border-width: 2px 0 0 2px; background: #f8f8f8; }

.status { display: flex; align-items: center; height: 34px; border-bottom: 2px solid #405060; background: #f0f0f0; color: #222; }
.index { display: grid; flex: none; grid-template-columns: 54px 94px 58px 90px 92px; width: 413px; white-space: nowrap; }
.index b { color: #007a00; font: bold 21px/32px "Liberation Sans", sans-serif; }
.index .r, .amt { text-align: right; }
.n, .amt { font-size: 24px; line-height: 32px; font-weight: 300; }
.index .amt b { color: #111; line-height: 24px; }

.banner { position: absolute; right: 0; bottom: 0; display: flex; align-items: center; box-sizing: border-box; width: 50%; height: 109px; padding-left: 23px; background: #80abda; white-space: nowrap; }
.site { padding-bottom: 16px; color: #1a0080; font-size: 75px; line-height: 93px; font-weight: 900; }
.coin { margin: 0 40px 0 35px; }
.coin-text { fill: #fff; font: bold 10px "Liberation Sans", sans-serif; }
.url { padding-bottom: 10px; color: #fff; font: bold 88px/96px "Liberation Serif", serif; -webkit-text-stroke: 3px #fff; }
</style>
